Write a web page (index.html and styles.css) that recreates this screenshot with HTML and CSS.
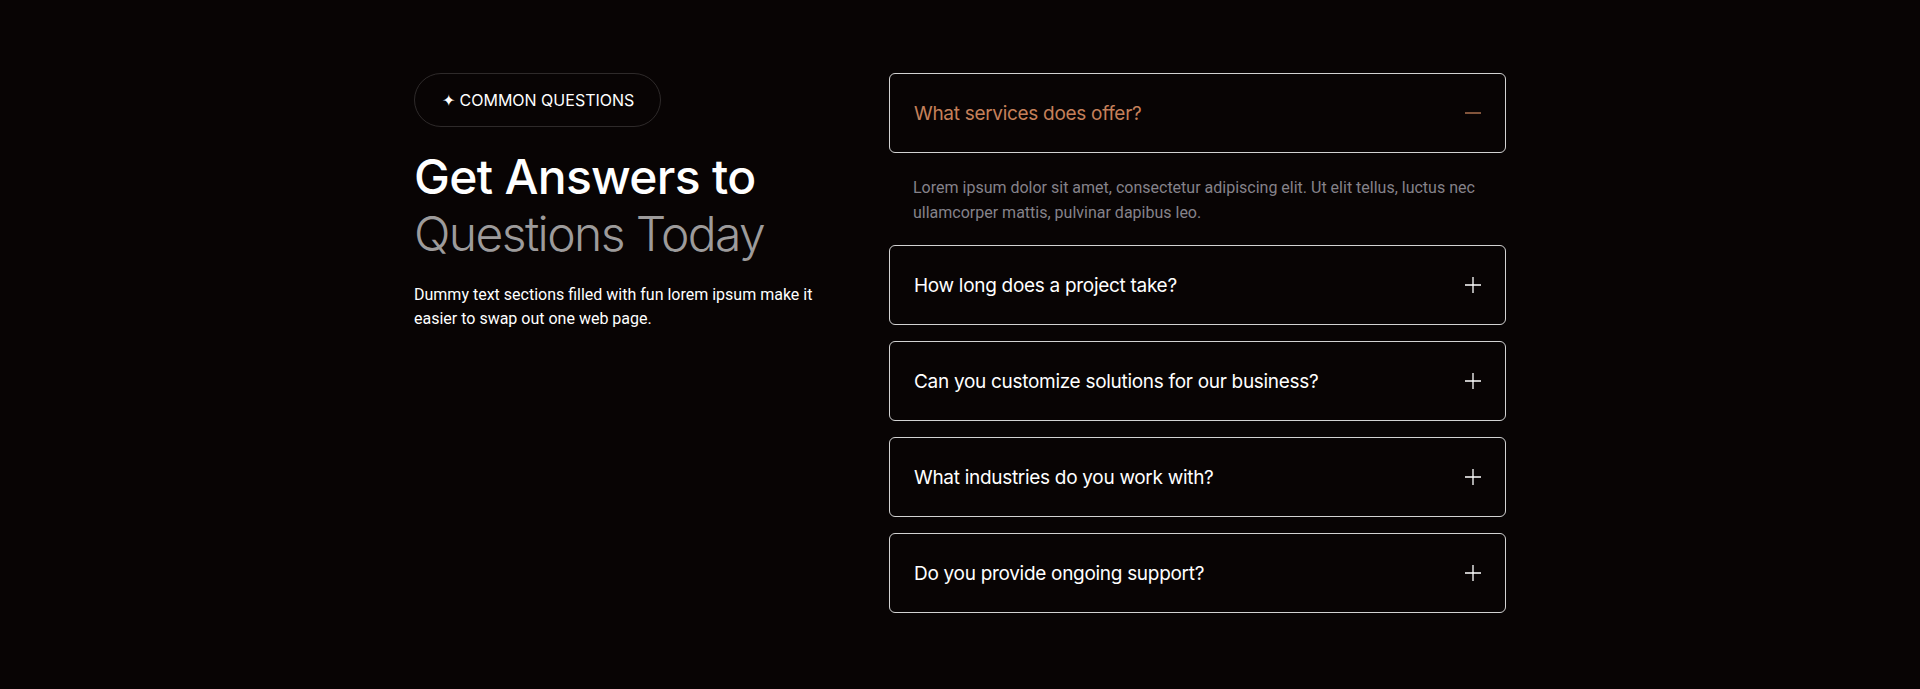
FILE: index.html
```html
<!DOCTYPE html>
<html>
<head>
  <title>FAQ</title>
  <link rel="stylesheet" href="styles.css">
</head>
<body>

  <section class="faq">
    <!-- Intro -->
    <div class="intro">
      <span class="badge">✦ COMMON QUESTIONS</span>
      <h2 class="title">Get Answers to <span class="muted">Questions Today</span></h2>
      <p class="lead">Dummy text sections filled with fun lorem ipsum make it easier to swap out one web page.</p>
    </div>

    <!-- Accordion -->
    <div class="list">
      <div class="item open">
        <div class="head">
          <span>What services does offer?</span>
          <svg class="icon" viewBox="0 0 16 16"><path d="M0 8h16"/></svg>
        </div>
        <p class="answer">Lorem ipsum dolor sit amet, consectetur adipiscing elit. Ut elit tellus, luctus nec ullamcorper mattis, pulvinar dapibus leo.</p>
      </div>

      <div class="item">
        <div class="head">
          <span>How long does a project take?</span>
          <svg class="icon" viewBox="0 0 16 16"><path d="M0 8h16M8 0v16"/></svg>
        </div>
      </div>

      <div class="item">
        <div class="head">
          <span>Can you customize solutions for our business?</span>
          <svg class="icon" viewBox="0 0 16 16"><path d="M0 8h16M8 0v16"/></svg>
        </div>
      </div>

      <div class="item">
        <div class="head">
          <span>What industries do you work with?</span>
          <svg class="icon" viewBox="0 0 16 16"><path d="M0 8h16M8 0v16"/></svg>
        </div>
      </div>

      <div class="item">
        <div class="head">
          <span>Do you provide ongoing support?</span>
          <svg class="icon" viewBox="0 0 16 16"><path d="M0 8h16M8 0v16"/></svg>
        </div>
      </div>
    </div>
  </section>

</body>
</html>
```

FILE: styles.css
```css
body      { margin: 0; background: #080404; color: #fff; font-family: Roboto, sans-serif; }

.faq      {
  max-width: 1092px; margin: 0 auto; padding: 73px 0 77px;
  display: grid; grid-template-columns: 451px 1fr; column-gap: 24px;
}

/* left side */
.badge    {
  display: inline-flex; align-items: center; height: 52px; padding: 0 26px 0 27px;
  border: 1px solid #2e2a2a; border-radius: 30px;
  font-family: Inter, sans-serif; font-size: 16px; font-weight: 400;
}
.title    {
  margin: 21px 0 0; font-family: Inter, sans-serif; font-weight: 500;
  font-size: 48px; line-height: 57px; letter-spacing: -0.7px;
}
.muted    { display: block; color: #9d9b9b; font-weight: 300; letter-spacing: -1.6px; }
.lead     { margin: 21px 0 0; font-size: 16px; line-height: 24px; max-width: 420px; }

/* accordion */
.list     { display: flex; flex-direction: column; gap: 16px; }
.head     {
  height: 78px; padding: 0 24px; border: 1px solid #d2d2d2; border-radius: 6px;
  display: flex; align-items: center; justify-content: space-between;
  font-family: Inter, sans-serif; font-size: 19px; letter-spacing: -0.3px;
}
.icon     { width: 16px; height: 16px; fill: none; stroke: #fff; stroke-width: 1.3; }
.open .head  { color: #c5805a; }
.open .icon  { stroke: #c5805a; }
.answer   { margin: 0; padding: 22px 24px 4px; color: #85828a; font-size: 16px; line-height: 25px; }
```
